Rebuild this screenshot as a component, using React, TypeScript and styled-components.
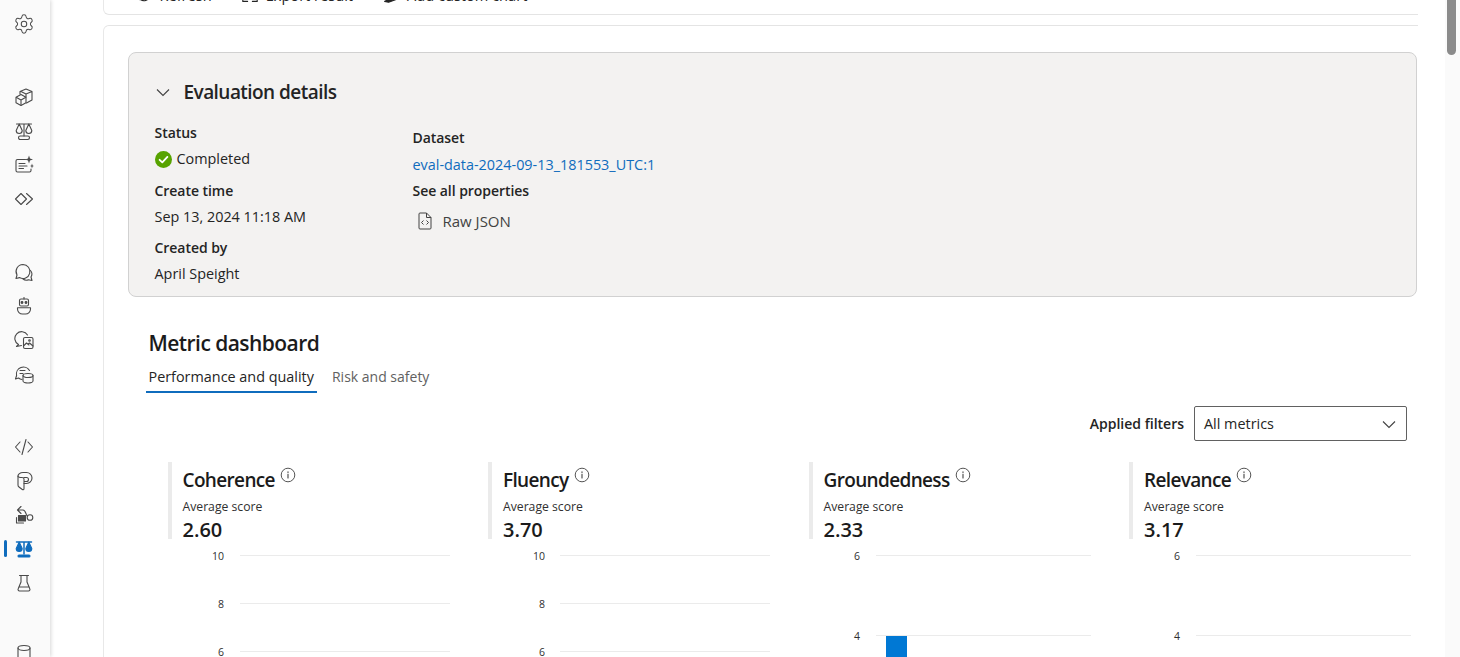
import React from "react";
import styled, { createGlobalStyle } from "styled-components";
import { Settings } from "lucide-react";

const Global = createGlobalStyle`
  html, body { margin: 0; padding: 0; background: #fff; }
  body { font-family: "Open Sans", "Noto Sans", sans-serif; color: #242424; overflow: hidden; }
`;

const Page = styled.div`
  display: flex;
  width: 1460px;
  height: 657px;
  overflow: hidden;
  background: #fff;
`;

const Rail = styled.nav`
  flex: 0 0 50px;
  display: flex;
  flex-direction: column;
  align-items: center;
  padding: 7px 2px 0 0;
  box-sizing: border-box;
  background: #fafafa;
  box-shadow: 1px 0 4px rgba(0, 0, 0, 0.16);
  z-index: 1;
`;

const RailItem = styled.div<{ $gap?: number; $active?: boolean }>`
  position: relative;
  flex: 0 0 34px;
  width: 100%;
  margin-top: ${(p) => p.$gap ?? 0}px;
  display: flex;
  align-items: center;
  justify-content: center;
  color: ${(p) => (p.$active ? "#0f6cbd" : "#4a4a4a")};
  &::before {
    content: "";
    display: ${(p) => (p.$active ? "block" : "none")};
    position: absolute;
    left: 4px;
    top: 8px;
    width: 3px;
    height: 17px;
    border-radius: 2px;
    background: #0f6cbd;
  }
`;

const Glyph = styled.svg.attrs({ viewBox: "0 0 20 20", fill: "none", stroke: "currentColor" })`
  width: 20px;
  height: 20px;
  stroke-width: 1.1;
  stroke-linejoin: round;
  stroke-linecap: round;
  flex: none;
`;

const ToolGlyph = styled(Glyph)`
  width: 16px;
  height: 16px;
  stroke-width: 1.4;
`;

const Cubes = () => (
  <Glyph>
    <path d="M7 7.5 12 10.2V15.8L7 18.5 2 15.8V10.2Z" />
    <path d="M2.5 10.5 7 13 11.5 10.5M7 13V18" />
    <path d="M6 7V4.5L12 2 18 4.5V13L12.5 16M7 4.5 12 7 18 4.5M12 7V10" />
  </Glyph>
);
const Scale = () => (
  <Glyph>
    <path d="M2.5 3H17.5M10 3V15" />
    <path d="M5.2 3 2.2 9.5A3 3 0 0 0 8.2 9.5ZM14.8 3 11.8 9.5A3 3 0 0 0 17.8 9.5Z" />
    <rect x="4.5" y="15" width="11" height="3.5" rx="1.7" />
  </Glyph>
);
const ScaleSolid = () => (
  <Glyph>
    <path d="M2.5 3H17.5M10 3V15" strokeWidth="1.5" />
    <path d="M5.2 3 2.2 9.5A3 3 0 0 0 8.2 9.5ZM14.8 3 11.8 9.5A3 3 0 0 0 17.8 9.5Z" fill="currentColor" />
    <rect x="4" y="16" width="12" height="2" rx="1" fill="currentColor" />
  </Glyph>
);
const CardSpark = () => (
  <Glyph>
    <path d="M11.5 4.5H3.5A1.5 1.5 0 0 0 2 6V15.5A1.5 1.5 0 0 0 3.5 17H15.5A1.5 1.5 0 0 0 17 15.5V14" />
    <path d="M5 8.5H11M5 11H13M5 13.5H9.5" />
    <path d="M15 0.5 16 3.5 19 4.5 16 5.5 15 8.5 14 5.5 11 4.5 14 3.5Z" fill="currentColor" stroke="none" />
    <path d="M18 8.5 18.6 10.4 20 11 18.6 11.6 18 13.5 17.4 11.6 16 11 17.4 10.4Z" fill="currentColor" stroke="none" />
  </Glyph>
);
const Diamonds = () => (
  <Glyph>
    <path d="M7 4.5 12.5 10 7 15.5 1.5 10Z" />
    <path d="M12.5 4.5 18.5 10 12.5 15.5" />
  </Glyph>
);
const Chat = () => (
  <Glyph>
    <path d="M9 2.5A7 7 0 1 1 5.5 15.6L2 16.5 3 13A7 7 0 0 1 9 2.5Z" />
    <path d="M16.5 8.5A5.5 5.5 0 0 1 17 15L18 18.5 14.5 17.7A5.5 5.5 0 0 1 9 17" />
  </Glyph>
);
const Bot = () => (
  <Glyph>
    <rect x="5.5" y="3" width="9" height="7" rx="1.5" />
    <circle cx="8" cy="6.5" r="0.9" fill="currentColor" />
    <circle cx="12" cy="6.5" r="0.9" fill="currentColor" />
    <path d="M10 1.5V3" />
    <path d="M3.5 11.8H16.5V13A5 5 0 0 1 11.5 18H8.5A5 5 0 0 1 3.5 13Z" />
  </Glyph>
);
const ChatImage = () => (
  <Glyph>
    <path d="M13.5 5A6.8 6.8 0 1 0 4.5 14.5L2.5 16.5 7.5 15.5" />
    <rect x="9.5" y="7.5" width="9.5" height="11" rx="1.5" />
    <circle cx="15.5" cy="10.5" r="0.8" />
    <path d="M9.5 16 12.5 13 15 15M14 14 15.5 13 19 16" />
  </Glyph>
);
const ChatData = () => (
  <Glyph>
    <path d="M15.5 6.5A7 7 0 0 0 2.6 11.5L1.5 15 4.5 14A7 7 0 0 0 8 15.5" />
    <path d="M6 6.5H11M6 9.5H9" />
    <ellipse cx="14" cy="11.5" rx="5" ry="2" />
    <path d="M9 11.5V17C9 18 11.5 19 14 19S19 18 19 17V11.5" />
  </Glyph>
);
const Code = () => (
  <Glyph>
    <path d="M6 5 1.5 10 6 15M14 5 18.5 10 14 15M12 2.5 8 17.5" />
  </Glyph>
);
const Prompt = () => (
  <Glyph>
    <path d="M4 5C4 3.5 6 1.5 9 1.5H12.5A5.5 5.5 0 0 1 12.5 12.5H10V17.5C10 19 9 19 8 18.3L5 16C4.3 15.5 4 15 4 14Z" />
    <path d="M4 5C4 6 5.5 6.5 8 6.5 9.5 6.5 10 7 10 8V12.5M10 6.5H12.5A2 2 0 0 1 12.5 10.5H10" />
  </Glyph>
);
const Flow = () => (
  <Glyph>
    <path d="M7 1.5 3.5 5 7 8.5M3.5 5H9C12 5 11.5 10 13.5 11" />
    <circle cx="16" cy="12.5" r="2.8" />
    <rect x="4.5" y="10.5" width="7" height="5.5" fill="currentColor" />
    <path d="M2.5 12.5V18H9.5" />
  </Glyph>
);
const Flask = () => (
  <Glyph>
    <path d="M5.5 2.5H14.5M7 2.5V9L4.2 15.8A1.5 1.5 0 0 0 5.5 18H14.5A1.5 1.5 0 0 0 15.8 15.8L13 9V2.5M5.5 14H14.5" />
  </Glyph>
);
const Database = () => (
  <Glyph>
    <ellipse cx="10" cy="7" rx="6" ry="2.5" />
    <path d="M4 7V18M16 7V18" />
  </Glyph>
);
const Gear = styled(Settings).attrs({ size: 22, strokeWidth: 1.1 })``;

const Main = styled.main`
  flex: 1;
  min-width: 0;
  padding: 0 27px 0 53px;
`;

const ToolCard = styled.div`
  box-sizing: border-box;
  height: 40px;
  margin-top: -25px;
  padding: 0 0 0 31.5px;
  display: flex;
  align-items: center;
  gap: 30px;
  border-left: 1.5px solid #e8e8e8;
  border-bottom: 1.5px solid #e4e4e4;
  border-bottom-left-radius: 6px;
`;

const ToolButton = styled.div`
  display: flex;
  align-items: center;
  gap: 8px;
  font-size: 14.6px;
  line-height: 20px;
  color: #242424;
  white-space: nowrap;
`;

const ResultCard = styled.section`
  margin-top: 10px;
  padding: 26px 0 0 23.5px;
  border-left: 1.5px solid #e8e8e8;
  border-top: 1.5px solid #e4e4e4;
  border-top-left-radius: 6px;
`;

const Panel = styled.div`
  box-sizing: border-box;
  height: 245px;
  margin: 0 1px 0 0;
  padding: 25px 26px 0;
  background: #f3f2f1;
  border: 1px solid #d1d1d1;
  border-radius: 8px;
`;

const PanelHeading = styled.div`
  display: flex;
  align-items: center;
  gap: 13px;
  margin-bottom: 17px;
`;

const PanelTitle = styled.h2`
  margin: 0;
  font-size: 19px;
  line-height: 28px;
  font-weight: 600;
  letter-spacing: -0.55px;
`;

const Chevron = styled.svg.attrs({ viewBox: "0 0 16 16", fill: "none", stroke: "currentColor" })`
  width: 16px;
  height: 16px;
  stroke-width: 1.1;
  color: #424242;
`;

const Columns = styled.div`
  display: grid;
  grid-template-columns: 258px 1fr;
`;

const Column = styled.div<{ $offset?: number }>`
  padding-top: ${(p) => p.$offset ?? 0}px;
`;

const Label = styled.div<{ $top?: number }>`
  font-size: 14px;
  line-height: 20px;
  font-weight: 600;
  letter-spacing: -0.05px;
  margin-top: ${(p) => p.$top ?? 0}px;
`;

const Value = styled.div<{ $top?: number }>`
  display: flex;
  align-items: center;
  gap: 5px;
  font-size: 14.4px;
  line-height: 20px;
  margin-top: ${(p) => p.$top ?? 0}px;
`;

const Link = styled.a`
  color: #0f6cbd;
  text-decoration: none;
`;

const JsonRow = styled(Value)`
  gap: 11px;
  padding-left: 5px;
  font-size: 15px;
  color: #424242;
`;

const SectionTitle = styled.h1`
  margin: 31px 0 0 21px;
  font-size: 21px;
  line-height: 30px;
  font-weight: 600;
  letter-spacing: -0.55px;
  color: #1b1b1b;
`;

const Tabs = styled.div`
  display: flex;
  gap: 12px;
  margin: 9px 0 0 18px;
`;

const Tab = styled.div<{ $active?: boolean }>`
  padding: 0 3px 4px;
  font-size: ${(p) => (p.$active ? "14.4px" : "14px")};
  line-height: 20px;
  color: ${(p) => (p.$active ? "#242424" : "#616161")};
  border-bottom: 2.5px solid ${(p) => (p.$active ? "#0f6cbd" : "transparent")};
`;

const Filters = styled.div`
  display: flex;
  justify-content: flex-end;
  align-items: center;
  gap: 10px;
  margin: 13px 11px 0 0;
`;

const FilterLabel = styled.span`
  font-size: 14px;
  line-height: 20px;
  font-weight: 600;
`;

const Select = styled.div`
  box-sizing: border-box;
  width: 213px;
  height: 35px;
  padding: 0 9px;
  display: flex;
  align-items: center;
  justify-content: space-between;
  font-size: 14.4px;
  border: 1px solid #616161;
  border-radius: 2px;
  background: #fff;
`;

const Metrics = styled.div`
  display: grid;
  grid-template-columns: repeat(4, 320.5px);
  margin: 21px 0 0 40px;
`;

const MetricHead = styled.div`
  box-sizing: border-box;
  height: 77px;
  padding: 5px 0 0 11px;
  border-left: 4px solid #ebebeb;
`;

const MetricTitle = styled.div`
  display: flex;
  align-items: flex-start;
  gap: 5px;
  font-size: 19px;
  line-height: 26px;
  font-weight: 600;
  letter-spacing: -0.65px;
  color: #1b1b1b;
`;

const InfoIcon = styled.svg.attrs({ viewBox: "0 0 16 16", fill: "none", stroke: "#424242" })`
  width: 16px;
  height: 16px;
  stroke-width: 0.9;
`;

const Caption = styled.div`
  margin-top: 6px;
  font-size: 12.2px;
  line-height: 16px;
  color: #303030;
`;

const Score = styled.div`
  margin-top: 2px;
  font-size: 20px;
  line-height: 26px;
  font-weight: 600;
  color: #1b1b1b;
`;

const ChartFrame = styled.svg`
  display: block;
  width: 320px;
  height: 120px;
  margin-top: 6px;
  font-family: "Open Sans", "Noto Sans", sans-serif;
  font-size: 10.5px;
  overflow: hidden;
`;

const Scrollbar = styled.div`
  flex: 0 0 15px;
  background: #fafafa;
  padding-left: 2px;
  box-sizing: border-box;
`;

const ScrollThumb = styled.div`
  width: 9px;
  height: 59px;
  margin-top: -4px;
  border-radius: 5px;
  background: #8b8b8b;
`;

type Tick = { label: string; y: number };
type ChartData = {
  title: string;
  score: string;
  labelX: number;
  lineX: number;
  ticks: Tick[];
  bar?: { x: number; y: number; w: number };
};

const charts: ChartData[] = [
  { title: "Coherence", score: "2.60", labelX: 56, lineX: 72, ticks: [{ label: "10", y: 10 }, { label: "8", y: 58 }, { label: "6", y: 106 }] },
  { title: "Fluency", score: "3.70", labelX: 57, lineX: 72, ticks: [{ label: "10", y: 10 }, { label: "8", y: 58 }, { label: "6", y: 106 }] },
  { title: "Groundedness", score: "2.33", labelX: 51, lineX: 67, ticks: [{ label: "6", y: 10 }, { label: "4", y: 90 }], bar: { x: 77, y: 91, w: 21 } },
  { title: "Relevance", score: "3.17", labelX: 51, lineX: 67, ticks: [{ label: "6", y: 10 }, { label: "4", y: 90 }] },
];

const Chart = ({ data }: { data: ChartData }) => (
  <ChartFrame viewBox="0 0 320 120">
    {data.ticks.map((t) => (
      <g key={t.label}>
        <line x1={data.lineX} x2={282} y1={t.y + 0.5} y2={t.y + 0.5} stroke="#ebebeb" />
        <text x={data.labelX} y={t.y + 4.5} textAnchor="end" fill="#303030">
          {t.label}
        </text>
      </g>
    ))}
    {data.bar && <rect x={data.bar.x} y={data.bar.y} width={data.bar.w} height={40} fill="#0078d4" />}
  </ChartFrame>
);

const Info = () => (
  <InfoIcon>
    <circle cx="8" cy="8" r="6.8" />
    <path d="M8 7.2V11M8 4.8V5.6" strokeLinecap="round" strokeWidth="1.1" />
  </InfoIcon>
);

const SmallDown = () => (
  <Chevron>
    <path d="M2 5.5 8 11.5 14 5.5" />
  </Chevron>
);

export default function App() {
  return (
    <Page>
      <Global />
      <Rail>
        <RailItem><Gear /></RailItem>
        <RailItem $gap={39}><Cubes /></RailItem>
        <RailItem><Scale /></RailItem>
        <RailItem><CardSpark /></RailItem>
        <RailItem><Diamonds /></RailItem>
        <RailItem $gap={39}><Chat /></RailItem>
        <RailItem><Bot /></RailItem>
        <RailItem><ChatImage /></RailItem>
        <RailItem><ChatData /></RailItem>
        <RailItem $gap={39}><Code /></RailItem>
        <RailItem><Prompt /></RailItem>
        <RailItem><Flow /></RailItem>
        <RailItem $active><ScaleSolid /></RailItem>
        <RailItem><Flask /></RailItem>
        <RailItem $gap={34}><Database /></RailItem>
      </Rail>
      <Main>
        <ToolCard>
          <ToolButton>
            <ToolGlyph><path d="M3 10A7 7 0 0 1 17 10 7 7 0 0 1 5 15M5 12V16H9" /></ToolGlyph>
            Refresh
          </ToolButton>
          <ToolButton>
            <ToolGlyph><path d="M1 10V18H7M19 10V18H13" /><path d="M10 2V12" /></ToolGlyph>
            Export result
          </ToolButton>
          <ToolButton>
            <ToolGlyph><path d="M2 18 14 12 18 15 7 19Z" fill="currentColor" /></ToolGlyph>
            Add custom chart
          </ToolButton>
        </ToolCard>
        <ResultCard>
          <Panel>
            <PanelHeading>
              <SmallDown />
              <PanelTitle>Evaluation details</PanelTitle>
            </PanelHeading>
            <Columns>
              <Column>
                <Label>Status</Label>
                <Value $top={6}>
                  <svg width="17" height="17" viewBox="0 0 17 17">
                    <circle cx="8.5" cy="8.5" r="8.5" fill="#57a300" />
                    <path d="M4.6 8.8 7.3 11.4 12.4 5.9" fill="none" stroke="#fff" strokeWidth="1.8" strokeLinecap="round" strokeLinejoin="round" />
                  </svg>
                  Completed
                </Value>
                <Label $top={12}>Create time</Label>
                <Value $top={6}>Sep 13, 2024 11:18 AM</Value>
                <Label $top={11}>Created by</Label>
                <Value $top={6}>April Speight</Value>
              </Column>
              <Column $offset={5}>
                <Label>Dataset</Label>
                <Value $top={7}><Link>eval-data-2024-09-13_181553_UTC:1</Link></Value>
                <Label $top={6}>See all properties</Label>
                <JsonRow $top={10}>
                  <svg width="14" height="18" viewBox="0 0 14 18" fill="none" stroke="#424242" strokeWidth="1">
                    <path d="M1 2A1 1 0 0 1 2 1H8.5L13 5.5V16A1 1 0 0 1 12 17H2A1 1 0 0 1 1 16ZM8.5 1V5.5H13" />
                    <path d="M5.5 8.5 3.5 10.5 5.5 12.5M8.5 8.5 10.5 10.5 8.5 12.5" />
                  </svg>
                  Raw JSON
                </JsonRow>
              </Column>
            </Columns>
          </Panel>
          <SectionTitle>Metric dashboard</SectionTitle>
          <Tabs>
            <Tab $active>Performance and quality</Tab>
            <Tab>Risk and safety</Tab>
          </Tabs>
          <Filters>
            <FilterLabel>Applied filters</FilterLabel>
            <Select>
              All metrics
              <SmallDown />
            </Select>
          </Filters>
          <Metrics>
            {charts.map((c) => (
              <div key={c.title}>
                <MetricHead>
                  <MetricTitle>
                    {c.title}
                    <Info />
                  </MetricTitle>
                  <Caption>Average score</Caption>
                  <Score>{c.score}</Score>
                </MetricHead>
                <Chart data={c} />
              </div>
            ))}
          </Metrics>
        </ResultCard>
      </Main>
      <Scrollbar>
        <ScrollThumb />
      </Scrollbar>
    </Page>
  );
}
